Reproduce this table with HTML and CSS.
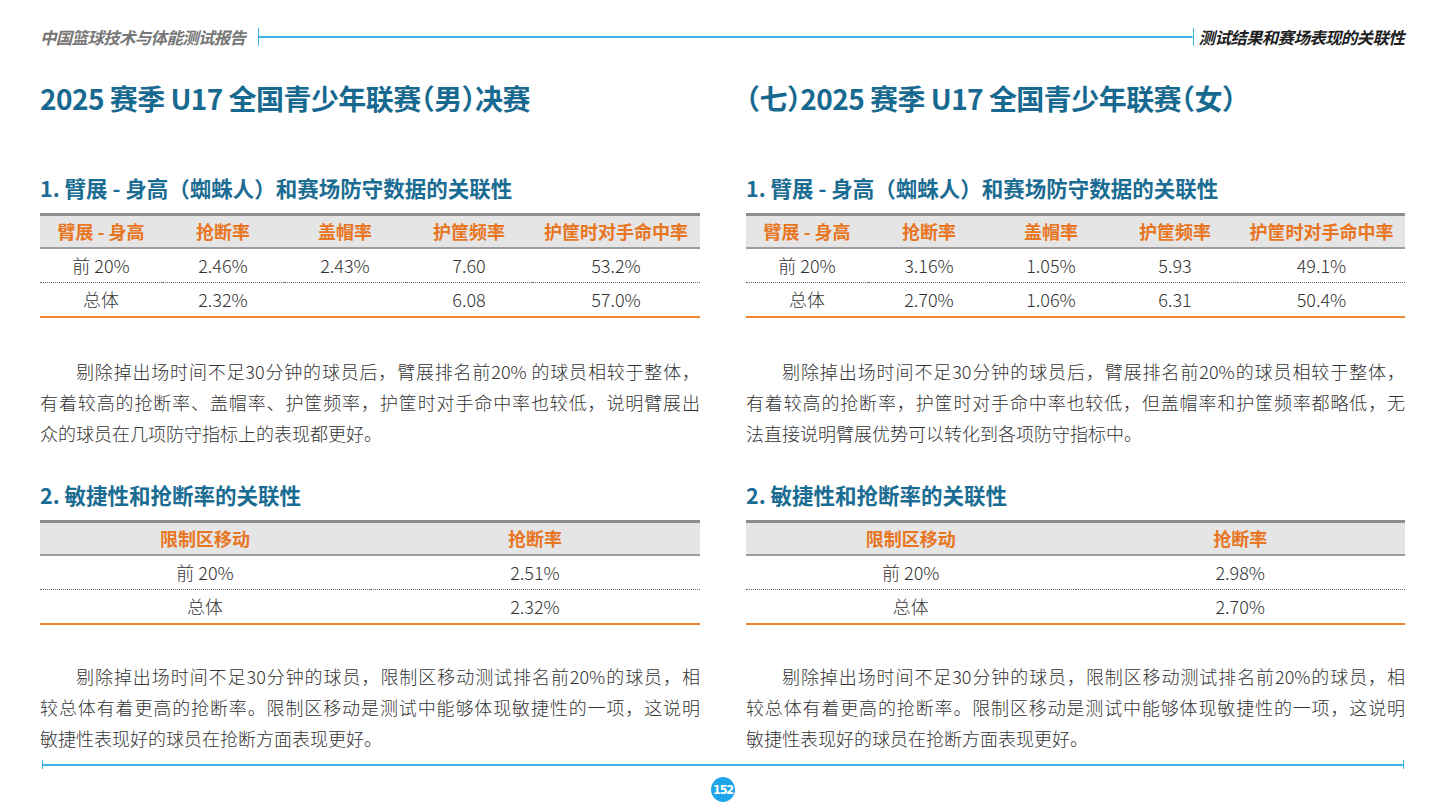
FILE: index.html
```html
<!DOCTYPE html>
<html lang="zh-CN">
<head>
<meta charset="utf-8">
<title>测试结果和赛场表现的关联性</title>
<link rel="stylesheet" href="styles.css">
</head>
<body>
<div class="page">
  <header class="running">
    <span class="run-left">中国篮球技术与体能测试报告</span>
    <span class="run-rule"></span>
    <span class="run-right">测试结果和赛场表现的关联性</span>
  </header>

  <main class="main">
    <section class="col">
      <h1 class="title">2025 赛季 U17 全国青少年联赛（男）决赛</h1>
      <h2 class="sub">1. 臂展 - 身高（蜘蛛人）和赛场防守数据的关联性</h2>
      <div class="tbl five">
        <div class="th">臂展 - 身高</div><div class="th">抢断率</div><div class="th">盖帽率</div><div class="th">护筐频率</div><div class="th">护筐时对手命中率</div>
        <div class="td r1">前 20%</div><div class="td r1">2.46%</div><div class="td r1">2.43%</div><div class="td r1">7.60</div><div class="td r1">53.2%</div>
        <div class="td">总体</div><div class="td">2.32%</div><div class="td blank"></div><div class="td">6.08</div><div class="td">57.0%</div>
      </div>
      <p class="para">
        <span class="ln first">剔除掉出场时间不足30分钟的球员后，臂展排名前20% 的球员相较于整体，</span>
        <span class="ln">有着较高的抢断率、盖帽率、护筐频率，护筐时对手命中率也较低，说明臂展出</span>
        <span class="ln last">众的球员在几项防守指标上的表现都更好。</span>
      </p>
      <h2 class="sub sub2">2. 敏捷性和抢断率的关联性</h2>
      <div class="tbl two">
        <div class="th">限制区移动</div><div class="th">抢断率</div>
        <div class="td r1">前 20%</div><div class="td r1">2.51%</div>
        <div class="td">总体</div><div class="td">2.32%</div>
      </div>
      <p class="para para2">
        <span class="ln first">剔除掉出场时间不足30分钟的球员，限制区移动测试排名前20%的球员，相</span>
        <span class="ln">较总体有着更高的抢断率。限制区移动是测试中能够体现敏捷性的一项，这说明</span>
        <span class="ln last">敏捷性表现好的球员在抢断方面表现更好。</span>
      </p>
    </section>

    <section class="col">
      <h1 class="title">（七）2025 赛季 U17 全国青少年联赛（女）</h1>
      <h2 class="sub">1. 臂展 - 身高（蜘蛛人）和赛场防守数据的关联性</h2>
      <div class="tbl five">
        <div class="th">臂展 - 身高</div><div class="th">抢断率</div><div class="th">盖帽率</div><div class="th">护筐频率</div><div class="th">护筐时对手命中率</div>
        <div class="td r1">前 20%</div><div class="td r1">3.16%</div><div class="td r1">1.05%</div><div class="td r1">5.93</div><div class="td r1">49.1%</div>
        <div class="td">总体</div><div class="td">2.70%</div><div class="td">1.06%</div><div class="td">6.31</div><div class="td">50.4%</div>
      </div>
      <p class="para">
        <span class="ln first">剔除掉出场时间不足30分钟的球员后，臂展排名前20%的球员相较于整体，</span>
        <span class="ln">有着较高的抢断率，护筐时对手命中率也较低，但盖帽率和护筐频率都略低，无</span>
        <span class="ln last">法直接说明臂展优势可以转化到各项防守指标中。</span>
      </p>
      <h2 class="sub sub2">2. 敏捷性和抢断率的关联性</h2>
      <div class="tbl two">
        <div class="th">限制区移动</div><div class="th">抢断率</div>
        <div class="td r1">前 20%</div><div class="td r1">2.98%</div>
        <div class="td">总体</div><div class="td">2.70%</div>
      </div>
      <p class="para para2">
        <span class="ln first">剔除掉出场时间不足30分钟的球员，限制区移动测试排名前20%的球员，相</span>
        <span class="ln">较总体有着更高的抢断率。限制区移动是测试中能够体现敏捷性的一项，这说明</span>
        <span class="ln last">敏捷性表现好的球员在抢断方面表现更好。</span>
      </p>
    </section>
  </main>

  <footer class="foot">
    <div class="foot-rule"></div>
    <div class="pageno">152</div>
  </footer>
</div>
</body>
</html>
```

FILE: styles.css
```css
* { box-sizing: border-box; }
html, body { margin: 0; padding: 0; background: #ffffff; }
body {
  font-family: "Noto Sans CJK SC", "Noto Sans", sans-serif;
  color: #333333;
}
.page { width: 1429px; height: 802px; overflow: hidden; }

/* running header */
.running {
  display: flex;
  align-items: center;
  height: 47px;
  padding: 27px 25px 0 40px;
}
.run-left, .run-right {
  font-size: 16.5px;
  line-height: 20px;
  font-weight: 700;
  font-style: italic;
  letter-spacing: -0.7px;
  white-space: nowrap;
}
.run-left { color: #777777; }
.run-right { color: #1e1e1e; }
.run-rule {
  flex: 1;
  height: 18px;
  margin: 0 5px 0 13px;
  border-left: 1px solid #3db4e6;
  border-right: 1px solid #3db4e6;
  background: linear-gradient(#3db4e6, #3db4e6) center / 100% 2px no-repeat;
}

/* columns */
.main {
  display: grid;
  grid-template-columns: 660px 659px;
  column-gap: 46px;
  padding-left: 40px;
}
.title {
  margin: 31px 0 0;
  font-size: 28px;
  line-height: 40px;
  font-weight: 700;
  letter-spacing: -0.55px;
  color: #17698f;
  font-feature-settings: "halt";
  white-space: nowrap;
}
.sub {
  margin: 56px 0 0;
  font-size: 21.5px;
  line-height: 28px;
  font-weight: 700;
  color: #1b6c92;
  white-space: nowrap;
}
.sub2 { margin-top: 32px; }

/* tables */
.tbl {
  display: grid;
  margin-top: 11px;
  border-top: 3px solid #8d8d8d;
  border-bottom: 2px solid #ec8630;
}
.five { grid-template-columns: 122px 122px 122px 126px 1fr; }
.two { grid-template-columns: 1fr 1fr; }
.th {
  height: 33px;
  line-height: 31px;
  background: #e5e5e5;
  border-bottom: 2px solid #9d9d9d;
  color: #e8751f;
  font-size: 18px;
  font-weight: 700;
  text-align: center;
  white-space: nowrap;
}
.td {
  height: 33px;
  line-height: 33px;
  text-align: center;
  font-size: 18px;
  font-weight: 300;
  color: #333333;
  white-space: nowrap;
}
.td.r1 {
  height: 34px;
  border-bottom: 1px dotted #6e6e6e;
}

/* paragraphs */
.para {
  margin: 38px 0 0;
  font-size: 18px;
  font-weight: 300;
  line-height: 31px;
  color: #333333;
  text-align: justify;
}
.para2 { margin-top: 36px; }
.ln { display: block; text-align-last: justify; white-space: nowrap; }
.ln.first { text-indent: 2em; }
.ln.last { text-align-last: left; }

/* footer */
.foot {
  padding: 6px 25px 0 42px;
}
.foot-rule {
  height: 9px;
  border-left: 1px solid #3db4e6;
  border-right: 1px solid #3db4e6;
  background: linear-gradient(#3db4e6, #3db4e6) center / 100% 2px no-repeat;
}
.pageno {
  width: 24px;
  height: 25px;
  margin: 8px auto 0;
  border-radius: 50%;
  background: #1ea5e9;
  color: #ffffff;
  font-family: "DejaVu Sans Condensed", "Liberation Sans", sans-serif;
  font-weight: 700;
  font-size: 12.5px;
  line-height: 25px;
  letter-spacing: -1.2px;
  text-align: center;
}
```
